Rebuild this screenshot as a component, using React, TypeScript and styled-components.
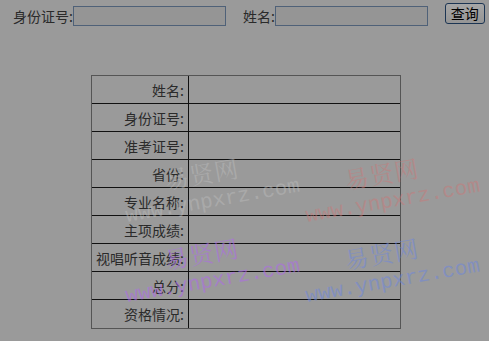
import { createGlobalStyle, styled } from 'styled-components';

const labels = [
  '姓名:',
  '身份证号:',
  '准考证号:',
  '省份:',
  '专业名称:',
  '主项成绩:',
  '视唱听音成绩:',
  '总分:',
  '资格情况:',
];

const marks = [
  { left: 114, top: 158, color: 'rgba(190, 190, 190, 0.45)' },
  { left: 294, top: 158, color: 'rgba(200, 120, 120, 0.5)' },
  { left: 114, top: 238, color: 'rgba(175, 105, 235, 0.55)' },
  { left: 294, top: 238, color: 'rgba(110, 135, 220, 0.55)' },
];

const GlobalStyle = createGlobalStyle`
  html, body {
    margin: 0;
    padding: 0;
    background: #9a9a9a;
  }
  body {
    font-family: "Noto Sans CJK SC", "DejaVu Sans", sans-serif;
    font-size: 14px;
    color: #2a2a2a;
  }
`;

const App: React.FC = (): JSX.Element => {
  return (
    <Page>
      <GlobalStyle />
      <SearchBar>
        <Field>
          <FieldLabel>身份证号:</FieldLabel>
          <FieldInput type="text" />
        </Field>
        <Field>
          <FieldLabel>姓名:</FieldLabel>
          <FieldInput type="text" />
        </Field>
        <QueryButton type="button">查询</QueryButton>
      </SearchBar>
      <ResultTable>
        {labels.map((label, i) => (
          <Row key={label} $last={i === labels.length - 1}>
            <LabelCell>{label}</LabelCell>
            <ValueCell />
          </Row>
        ))}
      </ResultTable>
      {marks.map((m) => (
        <Watermark key={`${m.left}-${m.top}`} $left={m.left} $top={m.top} $color={m.color}>
          <Brand>易贤网</Brand>
          <Site>www.ynpxrz.com</Site>
        </Watermark>
      ))}
    </Page>
  );
};

const Page = styled.div`
  position: relative;
  width: 489px;
  height: 341px;
  overflow: hidden;
  background: #9a9a9a;
`;

const SearchBar = styled.div`
  display: flex;
  align-items: flex-start;
  padding: 5px 0 0 13px;
  column-gap: 17px;
`;

const Field = styled.label`
  display: flex;
  align-items: center;
  height: 20px;
  margin-top: 1px;
`;

const FieldLabel = styled.span`
  font-size: 14px;
  line-height: 20px;
  color: #2a2a2a;
`;

const FieldInput = styled.input`
  box-sizing: border-box;
  width: 153px;
  height: 20px;
  margin: 0;
  padding: 0 2px;
  border: 1px solid #4f6178;
  background: #959595;
  outline: none;
`;

const QueryButton = styled.button`
  box-sizing: border-box;
  width: 40px;
  height: 21px;
  margin: -2px 0 0 0;
  padding: 0;
  border: 1px solid #1c3553;
  border-radius: 3px;
  background: linear-gradient(#a6a6a6, #959595);
  font-family: "Noto Sans CJK SC", sans-serif;
  font-size: 14px;
  line-height: 17px;
  color: #000;
`;

const ResultTable = styled.div`
  box-sizing: border-box;
  width: 310px;
  margin: 49px 0 0 91px;
  border: 1px solid #555;
`;

const Row = styled.div<{ $last: boolean }>`
  display: grid;
  grid-template-columns: 97px 1fr;
  height: 28px;
  box-sizing: border-box;
  border-bottom: ${({ $last }) => ($last ? 'none' : '1px solid #111')};
`;

const LabelCell = styled.div`
  display: flex;
  align-items: center;
  justify-content: flex-end;
  padding-right: 4px;
  border-right: 1px solid #111;
  font-size: 14px;
  color: #2a2a2a;
  white-space: nowrap;
`;

const ValueCell = styled.div``;

const Watermark = styled.div<{ $left: number; $top: number; $color: string }>`
  position: absolute;
  left: ${({ $left }) => $left}px;
  top: ${({ $top }) => $top}px;
  width: 192px;
  display: flex;
  flex-direction: column;
  align-items: center;
  row-gap: 5px;
  color: ${({ $color }) => $color};
  transform: rotate(-10deg);
  pointer-events: none;
`;

const Brand = styled.div`
  margin-right: 12px;
  font-family: "Noto Serif CJK SC", "Noto Sans CJK SC", serif;
  font-size: 24px;
  line-height: 28px;
  letter-spacing: 1px;
`;

const Site = styled.div`
  font-family: "Liberation Mono", monospace;
  font-size: 21px;
  line-height: 22px;
  white-space: nowrap;
`;

export default App;
